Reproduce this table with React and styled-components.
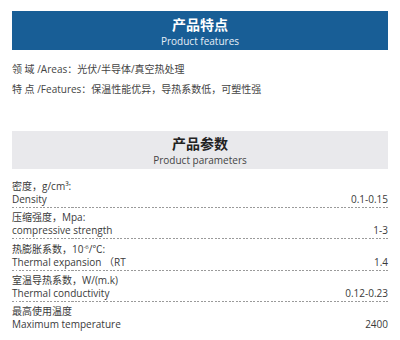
import React from 'react'
import styled, { createGlobalStyle } from 'styled-components'

const GlobalStyle = createGlobalStyle`
    body {
        margin: 0;
        background: #fff;
        font-family: "Open Sans", "Noto Sans CJK SC", sans-serif;
    }
`;

const params = [
    { cn: '密度，g/cm³:', en: 'Density', value: '0.1-0.15' },
    { cn: '压缩强度，Mpa:', en: 'compressive strength', value: '1-3' },
    { cn: <>热膨胀系数，10<sup>-6</sup>/℃:</>, en: 'Thermal expansion （RT', value: '1.4' },
    { cn: '室温导热系数，W/(m.k)', en: 'Thermal conductivity', value: '0.12-0.23' },
    { cn: '最高使用温度', en: 'Maximum temperature', value: '2400' },
]

export default function App() {
    return (
        <Page>
            <GlobalStyle />
            <SectionHead $variant="blue">
                <h2>产品特点</h2>
                <span>Product features</span>
            </SectionHead>
            <Features>
                <p>领 域 /Areas：光伏/半导体/真空热处理</p>
                <p>特 点 /Features：保温性能优异，导热系数低，可塑性强</p>
            </Features>
            <SectionHead $variant="gray">
                <h2>产品参数</h2>
                <span>Product parameters</span>
            </SectionHead>
            <ParamList>
                {params.map((p, i) => (
                    <ParamRow key={i} $last={i === params.length - 1}>
                        <Label>
                            <span>{p.cn}</span>
                            <span>{p.en}</span>
                        </Label>
                        <Value>{p.value}</Value>
                    </ParamRow>
                ))}
            </ParamList>
        </Page>
    )
}

const Page = styled.div`
    width: 376px;
    padding: 11px 12px 0;
    color: #3a3a3a;
`;

const SectionHead = styled.div`
    display: flex;
    flex-direction: column;
    align-items: center;
    justify-content: center;
    height: ${p => p.$variant === 'blue' ? '39px' : '38px'};
    background: ${p => p.$variant === 'blue' ? '#185e96' : '#e9e9ec'};

    h2 {
        margin: 0;
        font-size: 14px;
        line-height: 20px;
        font-weight: 700;
        font-family: "Noto Sans CJK SC", sans-serif;
        color: ${p => p.$variant === 'blue' ? '#fff' : '#222'};
    }

    span {
        font-size: 10px;
        line-height: 14px;
        color: ${p => p.$variant === 'blue' ? '#e6eef6' : '#444'};
    }
`;

const Features = styled.div`
    padding: 12px 0 35px;
    display: flex;
    flex-direction: column;
    gap: 6px;

    p {
        margin: 0;
        font-size: 10px;
        line-height: 14px;
        color: #444;
    }
`;

const ParamList = styled.div`
    padding-top: 11px;
`;

const ParamRow = styled.div`
    display: flex;
    align-items: flex-end;
    justify-content: space-between;
    padding: 0 0 2px;
    margin-bottom: 3.3px;
    background: ${p => p.$last ? 'none' : 'repeating-linear-gradient(to right, #9a9a9a 0 2px, transparent 2px 3.5px) left bottom / 100% 1px no-repeat'};
`;

const Label = styled.div`
    display: flex;
    flex-direction: column;
    font-size: 10px;
    line-height: 13px;
    color: #3a3a3a;

    sup {
        font-size: 6px;
        line-height: 0;
        vertical-align: 4px;
    }
`;

const Value = styled.div`
    font-size: 10px;
    line-height: 13px;
    color: #3a3a3a;
`;
